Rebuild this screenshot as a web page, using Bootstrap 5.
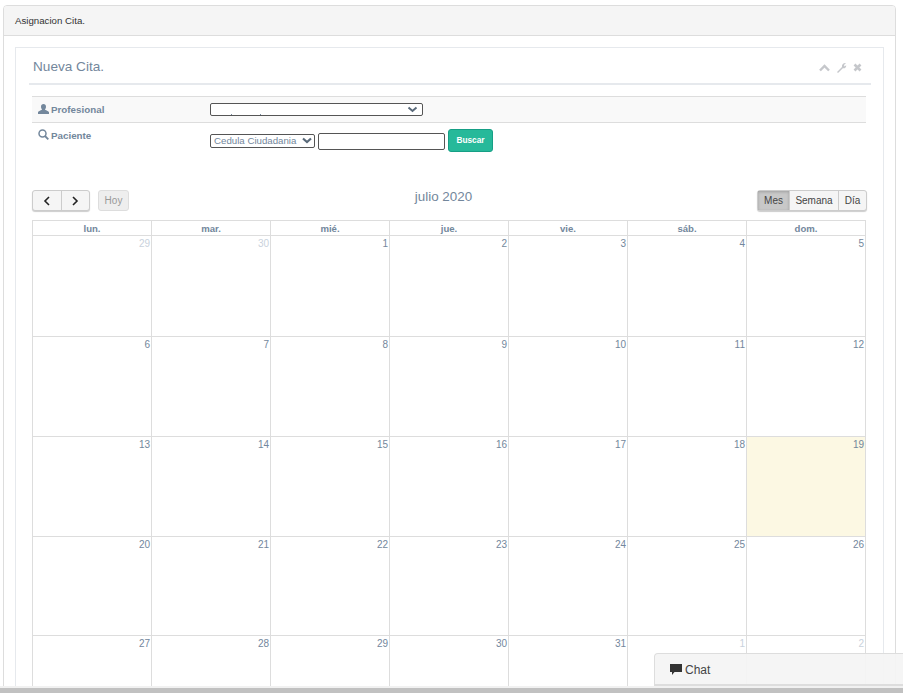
<!DOCTYPE html>
<html lang="es">
<head>
<meta charset="utf-8">
<title>Asignacion Cita</title>
<link href="https://cdn.jsdelivr.net/npm/bootstrap@5.3.0/dist/css/bootstrap.min.css" rel="stylesheet">
<style>
html,body{height:693px;overflow:hidden;background:#fff}
body{font-family:"Liberation Sans",Arial,sans-serif;font-size:11px;color:#73879c;position:relative;padding:5px 7px 0 3px}
.outer-panel{border:1px solid #ddd;border-radius:4px 4px 0 0;height:700px;background:#fff}
.outer-head{height:30px;background:#f5f5f5;border-bottom:1px solid #ddd;padding:8px 11px;color:#333;font-size:9.7px;line-height:14px;border-radius:3px 3px 0 0}
.inner-box{margin:11px 11px 0 11px;border:1px solid #e6e9ed;height:700px;padding:0 13px}
.box-title{height:37px;margin:0 -1px 0 0;border-bottom:2px solid #e6e9ed;padding:9px 3px 0 4px}
.box-title h2{font-size:13.6px;line-height:20px;margin:0;font-weight:400;color:#73879c}
.tool-set{gap:6px;margin-top:7px;margin-right:6px}
.form-area{margin:11px 4px 0 3px;font-size:9.8px;font-weight:700;color:#73879c}
.form-row-a{height:27px;background:#f9f9f9;border-top:1px solid #ddd;border-bottom:1px solid #ddd}
.form-row-b{height:41px}
.form-lab{width:178px;padding-left:6px;flex:none;line-height:12px}
.form-row-a .form-lab{padding-top:7px}
.form-row-b .form-lab{padding-top:6px}
.form-row-b .ctl-wrap{padding-top:6px}
.form-row-a .ctl-wrap{padding-top:6px}
.glyph{vertical-align:-1px;margin-right:2px}
.pro-select{width:213px;height:13px;border:1px solid #555;border-radius:2px;background:#fff;position:relative;overflow:hidden}
.pro-select svg{position:absolute;right:4px;top:2px}
.pro-select i{position:absolute;bottom:0;width:1px;height:1px;background:#73879c}
.pro-select i.tick-a{left:20px}
.pro-select i.tick-b{left:49px}
.doc-select{width:105px;height:14px;border:1px solid #555;border-radius:2px;background:#fff;font-size:9.7px;font-weight:400;line-height:12px;padding-left:3px;margin-top:5px;color:#73879c;white-space:nowrap;position:relative}
.doc-select svg{position:absolute;right:2px;top:2px}
.doc-input{width:127px;height:17px;border:1px solid #555;border-radius:2px;background:#fff;margin:4px 0 0 3px;display:block}
.go-btn{background:#26b99a;border:1px solid #169f85;border-radius:3px;color:#fff;width:45px;height:23px;margin-left:3px;font-size:8.3px;font-weight:700;padding:0;line-height:19px}
.cal-bar{height:21px;margin:26px 4px 0 3px;position:relative}
.cal-nav{width:58px;height:21px;border:1px solid #ccc;border-radius:3px;box-shadow:0 1px 1px rgba(0,0,0,.2);background:#f5f5f5}
.cal-nav span{flex:1;display:flex;align-items:center;justify-content:center}
.cal-nav span+span{border-left:1px solid #ccc}
.today-btn{width:31px;height:21px;margin-left:8px;border:1px solid #ddd;border-radius:3px;background:#eee;color:#999;font-size:10px;line-height:19px;text-align:center}
.cal-title{position:absolute;left:0;right:0;top:-3px;text-align:center;font-size:13.4px;line-height:20px;margin:0;font-weight:400;color:#73879c;padding-left:187px;padding-right:198px}
.view-group{border:1px solid #ccc;border-radius:3px;box-shadow:0 1px 1px rgba(0,0,0,.2);height:21px;margin-right:-1px;font-size:10px;color:#444;line-height:19px;background:#f5f5f5}
.view-group span{text-align:center;display:block}
.view-group span+span{border-left:1px solid #ccc}
.view-on{width:31px;background:#c8c8c8;box-shadow:inset 0 1px 3px rgba(0,0,0,.2)}
.view-wk{width:49px}
.view-dy{width:28px}
.cal-grid{border-collapse:collapse;table-layout:fixed;width:834px;margin:9px 0 0 3px}
.cal-grid th,.cal-grid td{border:1px solid #ddd;width:119px;padding:0}
.cal-grid th{height:15px;font-size:9.6px;line-height:13px;text-align:center;font-weight:700;color:#73879c}
.cal-grid td{height:100px;vertical-align:top;text-align:right;padding:1px 1px 0 0;font-size:10px;line-height:13px;color:#73879c}
.cal-grid tr.tall td{height:101px}
.cal-grid tr.short td{height:99px}
.cal-grid td.dim{color:#c9d2dc}
.cal-grid td.now{background:#fcf8e3}
.chat-dock{position:absolute;left:654px;top:653px;width:260px;height:33px;background:rgba(244,244,244,.93);border:1px solid #ddd;border-bottom:2px solid #ddd;border-radius:4px 0 0 0;padding:6px 0 0 15px;font-size:12px;line-height:20px;color:#444}
.chat-dock svg{vertical-align:-1px;margin-right:3px}
.scroll-track{position:absolute;left:0;right:0;top:686px;height:7px;background:#f1f1f1}
.scroll-thumb{height:5px;margin-top:2px;background:#c1c1c1}
</style>
</head>
<body>
<div class="outer-panel">
  <div class="outer-head">Asignacion Cita.</div>
  <div class="inner-box">
    <div class="box-title d-flex justify-content-between">
      <h2>Nueva Cita.</h2>
      <div class="tool-set d-flex align-items-start">
        <svg width="11" height="8" viewBox="0 0 11 8"><path d="M1 6.500 5.500 2 10 6.500" fill="none" stroke="#c5c7cb" stroke-width="2.400"/></svg>
        <svg width="11" height="11" viewBox="0 0 11 11" style="margin-top:-2px"><path d="M1 10 6 5C5.600 3 7 .8 10 1L8 3 8.500 4.500 10.200 3.200C10.500 5.500 8.500 6.800 6.800 6.200L2 11Z" fill="#c5c7cb"/></svg>
        <svg width="9" height="9" viewBox="0 0 9 9" style="margin-top:-1px"><path d="M1.500 1.500 7.500 7.500M7.500 1.500 1.500 7.500" stroke="#c5c7cb" stroke-width="2.600"/></svg>
      </div>
    </div>
    <div class="form-area">
      <div class="form-row-a d-flex">
        <div class="form-lab"><svg class="glyph" width="11" height="10" viewBox="0 0 11 10"><path d="M5.500 0C7 0 8 1 8 2.700 8 4 7.300 5 7 5.400 7 6.200 10.500 6.500 11 8.200V10H0V8.200C.5 6.500 4 6.200 4 5.400 3.700 5 3 4 3 2.700 3 1 4 0 5.500 0Z" fill="#73879c"/></svg>Profesional</div>
        <div class="ctl-wrap"><div class="pro-select"><i class="tick-a"></i><i class="tick-b"></i><svg width="11" height="7" viewBox="0 0 11 7"><path d="M1.500 1.500 5.500 5 9.500 1.500" fill="none" stroke="#5a6a7a" stroke-width="2"/></svg></div></div>
      </div>
      <div class="form-row-b d-flex">
        <div class="form-lab"><svg class="glyph" width="11" height="11" viewBox="0 0 11 11"><circle cx="4.500" cy="4.500" r="3.500" fill="none" stroke="#73879c" stroke-width="1.500"/><path d="M7 7 10.300 10.300" stroke="#73879c" stroke-width="1.800"/></svg>Paciente</div>
        <div class="ctl-wrap d-flex align-items-start">
          <div class="doc-select">Cedula Ciudadania<svg width="10" height="7" viewBox="0 0 10 7"><path d="M1 1.500 5 5 9 1.500" fill="none" stroke="#5a6a7a" stroke-width="2.200"/></svg></div>
          <div class="doc-input"></div>
          <button type="button" class="go-btn">Buscar</button>
        </div>
      </div>
    </div>
    <div class="cal-bar d-flex justify-content-between">
      <div class="d-flex">
        <div class="cal-nav d-flex">
          <span><svg width="8" height="10" viewBox="0 0 8 10"><path d="M6 1 2 5 6 9" fill="none" stroke="#222" stroke-width="1.600"/></svg></span>
          <span><svg width="8" height="10" viewBox="0 0 8 10"><path d="M2 1 6 5 2 9" fill="none" stroke="#222" stroke-width="1.600"/></svg></span>
        </div>
        <div class="today-btn">Hoy</div>
      </div>
      <h2 class="cal-title">julio 2020</h2>
      <div class="view-group d-flex">
        <span class="view-on">Mes</span><span class="view-wk">Semana</span><span class="view-dy">Día</span>
      </div>
    </div>
    <table class="cal-grid">
      <thead><tr><th>lun.</th><th>mar.</th><th>mié.</th><th>jue.</th><th>vie.</th><th>sáb.</th><th>dom.</th></tr></thead>
      <tbody>
        <tr class="tall"><td class="dim">29</td><td class="dim">30</td><td>1</td><td>2</td><td>3</td><td>4</td><td>5</td></tr>
        <tr><td>6</td><td>7</td><td>8</td><td>9</td><td>10</td><td>11</td><td>12</td></tr>
        <tr><td>13</td><td>14</td><td>15</td><td>16</td><td>17</td><td>18</td><td class="now">19</td></tr>
        <tr class="short"><td>20</td><td>21</td><td>22</td><td>23</td><td>24</td><td>25</td><td>26</td></tr>
        <tr><td>27</td><td>28</td><td>29</td><td>30</td><td>31</td><td class="dim">1</td><td class="dim">2</td></tr>
      </tbody>
    </table>
  </div>
</div>
<div class="chat-dock"><svg width="12" height="11" viewBox="0 0 12 11"><path d="M0 0H12V8H4.500L2 11V8H0Z" fill="#333"/></svg>Chat</div>
<div class="scroll-track"><div class="scroll-thumb"></div></div>
</body>
</html>
